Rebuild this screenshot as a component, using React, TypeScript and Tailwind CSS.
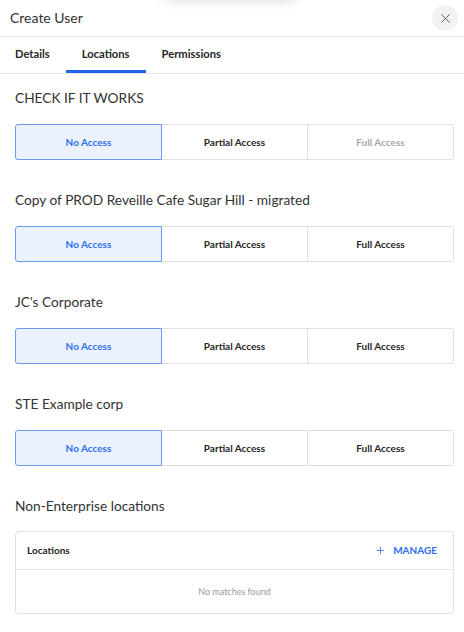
import React, { useState } from 'react';
import { X, Plus } from 'lucide-react';

type Level = 'NONE' | 'PARTIAL' | 'FULL';

const AccessGroup: React.FC<{ value: Level; fullDisabled?: boolean; onChange: (v: Level) => void }> = ({
  value,
  fullDisabled,
  onChange,
}) => {
  const opts: { id: Level; label: string }[] = [
    { id: 'NONE', label: 'No Access' },
    { id: 'PARTIAL', label: 'Partial Access' },
    { id: 'FULL', label: 'Full Access' },
  ];
  return (
    <div className="flex h-[36px]">
      {opts.map((o, i) => {
        const active = value === o.id;
        const disabled = o.id === 'FULL' && fullDisabled;
        return (
          <button
            key={o.id}
            onClick={() => !disabled && onChange(o.id)}
            className={`relative flex-1 border text-[10px] font-bold ${i > 0 ? '-ml-px' : ''} ${
              i === 0 ? 'rounded-l-[3px]' : ''
            } ${i === 2 ? 'rounded-r-[3px]' : ''} ${
              active
                ? 'z-10 border-[#6d9af2] bg-[#ebf2fd] text-[#2f6fed]'
                : disabled
                ? 'border-[#e0e0e0] text-[#a8a8a8]'
                : 'border-[#e0e0e0] text-[#262626]'
            }`}
          >
            {o.label}
          </button>
        );
      })}
    </div>
  );
};

const App: React.FC = () => {
  const [tab, setTab] = useState('Locations');
  const [access, setAccess] = useState<Record<string, Level>>({});

  const orgs = [
    { name: 'CHECK IF IT WORKS', fullDisabled: true },
    { name: 'Copy of PROD Reveille Cafe Sugar Hill - migrated' },
    { name: "JC's Corporate" },
    { name: 'STE Example corp' },
  ];

  return (
    <div className="relative h-[632px] w-[464px] overflow-hidden bg-white text-[#333] font-['Lato',sans-serif]">
      {/* shadow of the menu above */}
      <div className="absolute left-[160px] top-[-30px] h-[30px] w-[140px] rounded-full bg-white shadow-[0_2px_12px_rgba(0,0,0,0.12)]" />

      {/* Header */}
      <div className="flex h-[37px] items-center justify-between border-b border-[#e6e6e6] pb-[2px] pl-[10px] pr-[6px]">
        <h2 className="text-[14px] text-[#333]">Create User</h2>
        <button className="mt-[2px] flex h-[26px] w-[26px] items-center justify-center rounded-full bg-[#f2f2f2] text-[#555]">
          <X size={15} strokeWidth={1.5} />
        </button>
      </div>

      {/* Tabs */}
      <div className="flex border-b border-[#e6e6e6]">
        {['Details', 'Locations', 'Permissions'].map((t) => (
          <button
            key={t}
            onClick={() => setTab(t)}
            className={`h-[36px] px-[16px] pt-[2px] text-[11.2px] font-bold text-[#262626] border-b-[3px] first:pl-[15px] ${
              tab === t ? 'border-[#2563eb]' : 'border-transparent'
            }`}
          >
            {t}
          </button>
        ))}
      </div>

      <div className="pl-[15px] pr-[10px]">
        {orgs.map((org) => (
          <div key={org.name} className="pt-[14px] pb-[16px]">
            <h3 className="mb-[16px] text-[13.7px] leading-[20px] text-[#333]">{org.name}</h3>
            <AccessGroup
              value={access[org.name] ?? 'NONE'}
              fullDisabled={org.fullDisabled}
              onChange={(v) => setAccess((a) => ({ ...a, [org.name]: v }))}
            />
          </div>
        ))}

        <div className="pt-[14px]">
          <h3 className="mb-[15px] text-[13.7px] leading-[20px] text-[#333]">Non-Enterprise locations</h3>
          <div className="rounded-[4px] border border-[#e0e0e0]">
            <div className="flex h-[38px] items-center justify-between border-b border-[#e6e6e6] pl-[11px] pr-[16px]">
              <span className="text-[10px] font-bold text-[#262626]">Locations</span>
              <button className="flex items-center gap-[7px] text-[10px] font-bold text-[#2f6fed]">
                <Plus size={11} strokeWidth={1.8} />
                MANAGE
              </button>
            </div>
            <div className="flex h-[43px] items-center justify-center text-[9px] text-[#9a9a9a]">
              No matches found
            </div>
          </div>
        </div>
      </div>
    </div>
  );
};

export default App;
